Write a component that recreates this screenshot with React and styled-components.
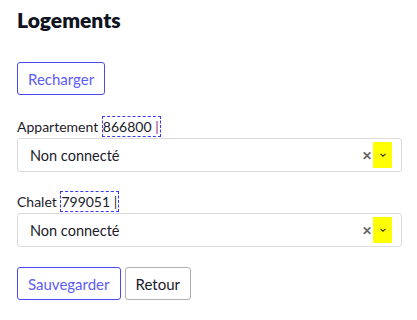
import React from "react";
import styled, { createGlobalStyle } from "styled-components";

const GlobalStyle = createGlobalStyle`
  body {
    margin: 0;
    background: #fff;
    font-family: Lato, "Open Sans", sans-serif;
    color: #1b1b2a;
  }
`;

const fields = [
  { label: "Appartement", code: "866800", cursor: "#a0307a" },
  { label: "Chalet", code: "799051", cursor: "#333" },
];

const App = () => {
  return (
    <Page>
      <GlobalStyle />
      <Title>Logements</Title>
      <Button $primary>Recharger</Button>
      <Fields>
        {fields.map((f) => (
          <Field key={f.code}>
            <Label>
              {f.label} <Code>{f.code} <Cursor $color={f.cursor}>|</Cursor></Code>
            </Label>
            <Select>
              <span>Non connecté</span>
              <Indicators>
                <Clear>✕</Clear>
                <Chevron>
                  <svg width="8" height="6" viewBox="0 0 8 6">
                    <path d="M1.5 1.8 L4 4.2 L6.5 1.8" fill="none" stroke="#333" strokeWidth="1.1" />
                  </svg>
                </Chevron>
              </Indicators>
            </Select>
          </Field>
        ))}
      </Fields>
      <Actions>
        <Button $primary>Sauvegarder</Button>
        <Button>Retour</Button>
      </Actions>
    </Page>
  );
};

//styled-components

const Page = styled.div`
  padding: 0 15px 0 17px;
`;

const Title = styled.h1`
  margin: 0 0 29px;
  padding-top: 7px;
  font-size: 21px;
  line-height: 26px;
  font-weight: 800;
  color: #0f1420;
`;

const Button = styled.button`
  height: 33px;
  padding: 0 10px;
  font-family: Lato, sans-serif;
  font-size: 15px;
  border-radius: 3px;
  background: #fff;
  cursor: pointer;
  border: 1px solid ${(p) => (p.$primary ? "#4a4af4" : "#b0b0b0")};
  color: ${(p) => (p.$primary ? "#5c5cf6" : "#1b1b2a")};
`;

const Fields = styled.div`
  display: flex;
  flex-direction: column;
  gap: 19px;
  margin-top: 21px;
`;

const Field = styled.div`
  display: flex;
  flex-direction: column;
`;

const Label = styled.div`
  font-size: 14px;
  line-height: 22px;
  height: 22px;
`;

const Code = styled.span`
  display: inline-block;
  border: 1px dashed #3a3af0;
  line-height: 19px;
  padding-right: 1px;
`;

const Cursor = styled.span`
  color: ${(p) => p.$color};
  font-size: 14px;
`;

const Select = styled.div`
  height: 34px;
  box-sizing: border-box;
  border: 1px solid #dcdcdc;
  border-radius: 3px;
  display: flex;
  align-items: center;
  justify-content: space-between;
  padding-left: 12px;
  padding-right: 9px;
  font-size: 14.5px;
`;

const Indicators = styled.div`
  display: flex;
  align-items: center;
  gap: 1px;
`;

const Clear = styled.span`
  color: #666;
  font-size: 12px;
  font-weight: 900;
`;

const Chevron = styled.span`
  display: flex;
  align-items: center;
  justify-content: center;
  width: 19px;
  height: 26px;
  background: #ffff00;
`;

const Actions = styled.div`
  display: flex;
  gap: 4px;
  margin-top: 20px;
`;

export default App;
